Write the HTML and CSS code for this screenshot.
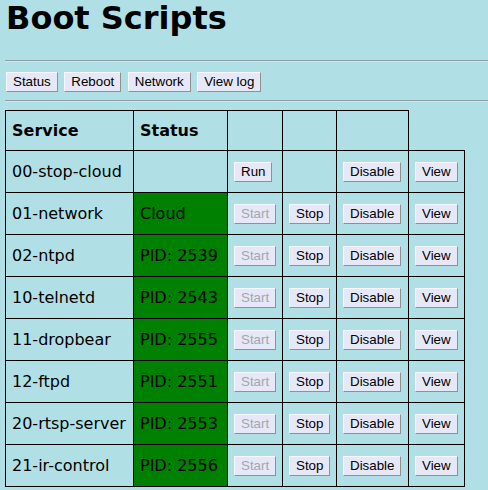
FILE: index.html
```html
<!DOCTYPE html>
<html lang="en">
<head>
  <meta charset="UTF-8">
  <meta name="viewport" content="width=device-width, initial-scale=1.0">
  <title>Boot Scripts</title>
  <link rel="stylesheet" href="styles.css">
</head>
<body>
  <h1 class="title">Boot Scripts</h1>
  <hr class="rule top-rule">

  <div class="nav">
    <button class="btn">Status</button>
    <button class="btn">Reboot</button>
    <button class="btn">Network</button>
    <button class="btn">View log</button>
  </div>

  <hr class="rule">

  <table class="scripts">
    <colgroup>
      <col class="col-name">
      <col class="col-status">
      <col class="col-start">
      <col class="col-stop">
      <col class="col-enable">
      <col class="col-view">
    </colgroup>
    <tr>
      <th>Service</th>
      <th>Status</th>
      <th></th>
      <th></th>
      <th></th>
    </tr>
    <tr>
      <td>00-stop-cloud</td>
      <td></td>
      <td><button class="btn">Run</button></td>
      <td></td>
      <td><button class="btn">Disable</button></td>
      <td><button class="btn">View</button></td>
    </tr>
    <tr>
      <td>01-network</td>
      <td class="running">Cloud</td>
      <td><button class="btn" disabled>Start</button></td>
      <td><button class="btn">Stop</button></td>
      <td><button class="btn">Disable</button></td>
      <td><button class="btn">View</button></td>
    </tr>
    <tr>
      <td>02-ntpd</td>
      <td class="running">PID: 2539</td>
      <td><button class="btn" disabled>Start</button></td>
      <td><button class="btn">Stop</button></td>
      <td><button class="btn">Disable</button></td>
      <td><button class="btn">View</button></td>
    </tr>
    <tr>
      <td>10-telnetd</td>
      <td class="running">PID: 2543</td>
      <td><button class="btn" disabled>Start</button></td>
      <td><button class="btn">Stop</button></td>
      <td><button class="btn">Disable</button></td>
      <td><button class="btn">View</button></td>
    </tr>
    <tr>
      <td>11-dropbear</td>
      <td class="running">PID: 2555</td>
      <td><button class="btn" disabled>Start</button></td>
      <td><button class="btn">Stop</button></td>
      <td><button class="btn">Disable</button></td>
      <td><button class="btn">View</button></td>
    </tr>
    <tr>
      <td>12-ftpd</td>
      <td class="running">PID: 2551</td>
      <td><button class="btn" disabled>Start</button></td>
      <td><button class="btn">Stop</button></td>
      <td><button class="btn">Disable</button></td>
      <td><button class="btn">View</button></td>
    </tr>
    <tr>
      <td>20-rtsp-server</td>
      <td class="running">PID: 2553</td>
      <td><button class="btn" disabled>Start</button></td>
      <td><button class="btn">Stop</button></td>
      <td><button class="btn">Disable</button></td>
      <td><button class="btn">View</button></td>
    </tr>
    <tr>
      <td>21-ir-control</td>
      <td class="running">PID: 2556</td>
      <td><button class="btn" disabled>Start</button></td>
      <td><button class="btn">Stop</button></td>
      <td><button class="btn">Disable</button></td>
      <td><button class="btn">View</button></td>
    </tr>
  </table>
</body>
</html>
```

FILE: styles.css
```css
body {
  margin: 0 0 0 5px;
  background: #b0e0e6;
  color: #000000;
  font-family: "DejaVu Sans", Verdana, sans-serif;
  font-size: 16px;
}

.title {
  margin: 0;
  font-size: 32px;
  line-height: 37px;
  font-weight: bold;
  padding-left: 1px;
}

.rule {
  height: 0;
  margin: 0;
  border: 0;
  border-top: 1px solid #8b9da1;
  border-bottom: 1px solid #c6eef2;
}

.top-rule {
  margin-top: 23px;
}

.nav {
  display: flex;
  gap: 6.5px;
  padding-left: 1px;
  margin: 10px 0 8px;
}

.btn {
  box-sizing: border-box;
  height: 20px;
  font-family: "Liberation Sans", Arial, sans-serif;
  font-size: 13.33px;
  line-height: 16px;
  color: #000000;
  background: #e6e8f8;
  padding: 1px 6px;
  margin: 0;
  border: 1px solid;
  border-color: #f6f6fe #8f9090 #8f9090 #f6f6fe;
  border-radius: 0;
  vertical-align: top;
}

.btn:disabled {
  color: #a3a6ad;
}

.scripts {
  margin-top: 8px;
  border-collapse: collapse;
  table-layout: fixed;
  width: 460px;
}

.col-name { width: 128px; }
.col-status { width: 94px; }
.col-start { width: 55px; }
.col-stop { width: 54px; }
.col-enable { width: 72px; }
.col-view { width: 56px; }

.scripts th,
.scripts td {
  border: 1px solid #000000;
  padding: 10px 6px;
  text-align: left;
  white-space: nowrap;
}

.scripts th {
  line-height: 19px;
  font-weight: bold;
}

.scripts td {
  line-height: 20px;
  padding-top: 11px;
}

.scripts td.running {
  background: #008000;
}
```
